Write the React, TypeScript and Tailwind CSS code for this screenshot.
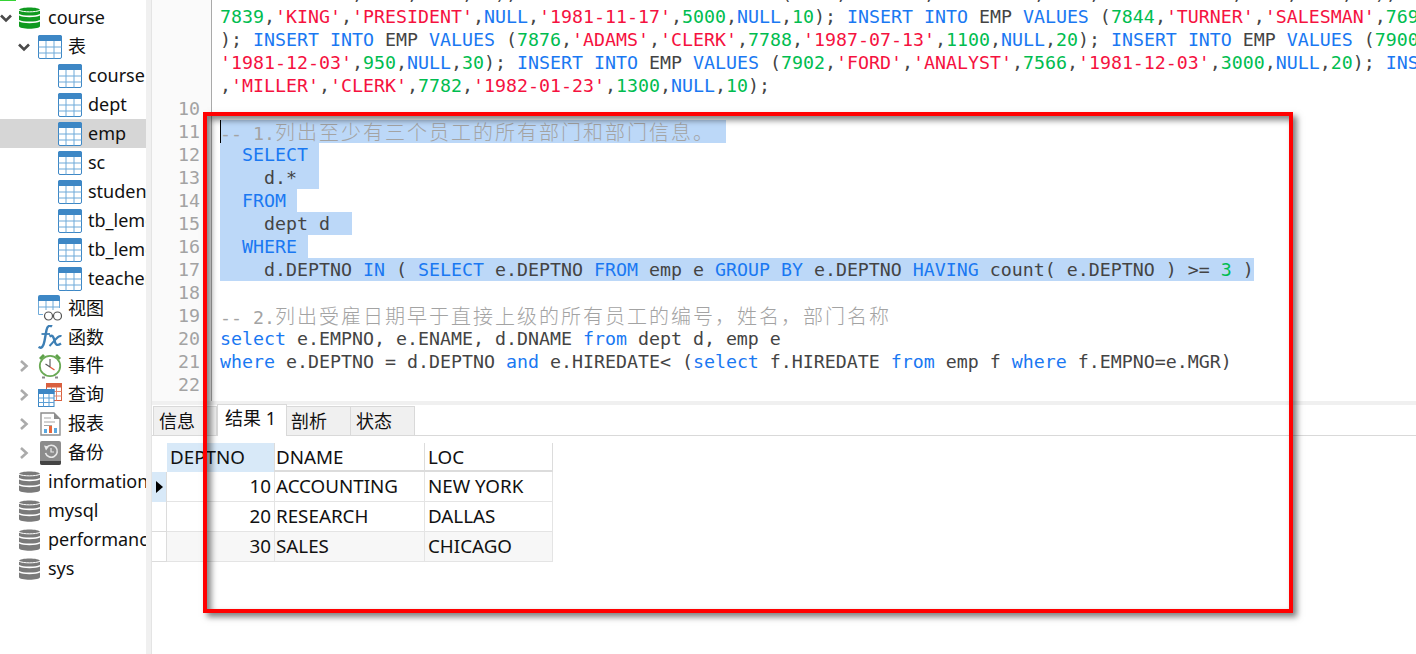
import React from "react";

const UI = "font-['Noto_Sans','Noto_Sans_CJK_SC',sans-serif]";

function Chevron({ open, dark }: { open?: boolean; dark?: boolean }) {
  return (
    <svg width="12" height="12" viewBox="0 0 12 12" className="shrink-0">
      <polyline
        points={open ? "1,3.5 6,8.5 11,3.5" : "3,1 8.5,6 3,11"}
        fill="none"
        stroke={dark ? "#4a4a4a" : "#ababab"}
        strokeWidth="2.6"
      />
    </svg>
  );
}

function Db({ color, band }: { color: string; band: string }) {
  return (
    <svg width="21" height="24" viewBox="0 0 21 24" className="shrink-0">
      <path d="M0 4 C0 0.5 21 0.5 21 4 V20 C21 23.6 0 23.6 0 20 Z" fill={color} />
      <path d="M0 8.6 C4 11 17 11 21 8.6 M0 14.6 C4 17 17 17 21 14.6" fill="none" stroke={band} strokeWidth="1.6" />
      <path d="M0 4.2 C4 6.4 17 6.4 21 4.2" fill="none" stroke={band} strokeWidth="1" />
    </svg>
  );
}

function TableIcon() {
  return (
    <svg width="24" height="24" viewBox="0 0 24 24" className="shrink-0">
      <rect x="0.5" y="0.5" width="23" height="23" rx="1.5" fill="#fff" stroke="#3d87c5" />
      <path d="M0 2 a2 2 0 0 1 2-2 H22 a2 2 0 0 1 2 2 V6 H0 Z" fill="#3d87c5" />
      <path d="M0.5 12 H23.5 M0.5 18 H23.5 M8 6 V23.5 M16 6 V23.5" stroke="#6faad9" strokeWidth="1" fill="none" />
    </svg>
  );
}

function ViewIcon() {
  return (
    <svg width="24" height="26" viewBox="0 0 24 26" className="shrink-0">
      <path d="M0 2 a2 2 0 0 1 2-2 H20 a2 2 0 0 1 2 2 V6 H0 Z" fill="#3d87c5" />
      <path d="M0.5 6 V19.5 H5 M21.5 6 V13 M0.5 12 H21.5 M8 6 V15 M15 6 V15" stroke="#6faad9" fill="none" />
      <circle cx="10.5" cy="21" r="4" fill="#fff" stroke="#555" strokeWidth="1.2" />
      <circle cx="19.5" cy="21" r="4" fill="#fff" stroke="#555" strokeWidth="1.2" />
    </svg>
  );
}

function FxIcon() {
  return (
    <svg width="24" height="24" viewBox="0 0 24 24" className="shrink-0">
      <path d="M0.5 22 C3.5 24 5.5 21.5 6.5 16 L8.5 5 C9.5 0.5 12 0 14 1.5" fill="none" stroke="#3d7fb5" strokeWidth="2.4" />
      <path d="M3.5 9 H12" fill="none" stroke="#3d7fb5" strokeWidth="1.8" />
      <path d="M11.5 11.5 C14.5 9.5 15.5 12 16.5 15.5 C17.5 19.5 18.5 21.5 23 18.5" fill="none" stroke="#3d7fb5" strokeWidth="2.4" />
      <path d="M23.5 11 C20 10 17 15.5 11.5 21" fill="none" stroke="#3d7fb5" strokeWidth="2" />
    </svg>
  );
}

function ClockIcon() {
  return (
    <svg width="24" height="26" viewBox="0 0 24 26" className="shrink-0">
      <path d="M1 5 L5 1 L7 3 L3 7 Z M23 5 L19 1 L17 3 L21 7 Z" fill="#5ea24a" />
      <circle cx="12" cy="13" r="10.2" fill="#fff" stroke="#6aa955" strokeWidth="1.8" />
      <path d="M12 6 V14 L7.5 11" fill="none" stroke="#555" strokeWidth="1.1" />
      <path d="M12 14 L16.5 17" fill="none" stroke="#e0593c" strokeWidth="1.4" />
      <rect x="4" y="23.5" width="3" height="2" fill="#888" />
      <rect x="17" y="23.5" width="3" height="2" fill="#888" />
    </svg>
  );
}

function QueryIcon() {
  return (
    <svg width="24" height="24" viewBox="0 0 24 24" className="shrink-0">
      <rect x="8.5" y="0.5" width="15" height="17" fill="#fff" stroke="#d9603f" />
      <rect x="8" y="0" width="16" height="4.5" fill="#d9603f" />
      <path d="M8.5 8.5 H23.5 M8.5 13 H23.5 M13.5 4 V17.5 M18.5 4 V17.5" stroke="#e58a70" fill="none" />
      <rect x="0.5" y="7" width="15.5" height="16.5" fill="#fff" stroke="#3d87c5" />
      <rect x="0" y="6" width="16.5" height="5" fill="#3d87c5" />
      <path d="M0.5 15 H16 M0.5 19.5 H16 M5.5 11 V23.5 M11 11 V23.5" stroke="#5b9fd6" fill="none" />
    </svg>
  );
}

function ReportIcon() {
  return (
    <svg width="21" height="24" viewBox="0 0 21 24" className="shrink-0">
      <path d="M1 1 H14 L20 7 V23 H1 Z" fill="#fff" stroke="#8d8d8d" strokeWidth="1.4" />
      <path d="M14 1 V7 H20 Z" fill="#8d8d8d" />
      <path d="M4 6 H11 M4 10 H15 M4 13.5 H12" stroke="#a5a5a5" strokeWidth="1.2" />
      <rect x="4" y="17" width="3" height="4" fill="#5aa8e0" />
      <rect x="9" y="14" width="3" height="7" fill="#e8673c" />
      <rect x="14" y="16" width="3" height="5" fill="#5aa8e0" />
    </svg>
  );
}

function BackupIcon() {
  return (
    <svg width="21" height="24" viewBox="0 0 21 24" className="shrink-0">
      <rect x="0" y="0" width="21" height="24" rx="2" fill="#8c8c8c" />
      <path d="M0 20 H21 V22 a2 2 0 0 1-2 2 H2 a2 2 0 0 1-2-2 Z" fill="#444" />
      <path d="M6.5 6.5 A6 6 0 1 1 5.5 12" fill="none" stroke="#e8e8e8" strokeWidth="1.6" />
      <path d="M4 4.5 L9 5.5 L6 9.5 Z" fill="#e8e8e8" />
      <path d="M11 7 V11 H14" fill="none" stroke="#e8e8e8" strokeWidth="1.2" />
    </svg>
  );
}

function Label({ children }: { children: React.ReactNode }) {
  return <span className="text-[18px] leading-[29px] text-[#111] whitespace-nowrap">{children}</span>;
}

function DbRow({ label, green, open }: { label: string; green?: boolean; open?: boolean }) {
  return (
    <div className="flex items-center h-[29px]">
      <div className="w-[19px] shrink-0 flex justify-start">{open && <Chevron open dark />}</div>
      {green ? <Db color="#0f9a1f" band="#ffffff" /> : <Db color="#7a7a7a" band="#ffffff" />}
      <div className="ml-[8px]"><Label>{label}</Label></div>
    </div>
  );
}

function GroupRow({ label, icon, open, plain }: { label: string; icon: React.ReactNode; open?: boolean; plain?: boolean }) {
  return (
    <div className="flex items-center h-[29px]">
      <div className="w-[38px] shrink-0 flex justify-end pr-[8px]">
        {!plain && <Chevron open={open} dark={open} />}
      </div>
      <div className="w-[24px] shrink-0 flex justify-center">{icon}</div>
      <div className={plain ? "ml-[6px] pt-[2px]" : "ml-[6px]"}><Label>{label}</Label></div>
    </div>
  );
}

function TableRow({ label, selected }: { label: string; selected?: boolean }) {
  return (
    <div className={selected ? "flex items-center h-[29px] pl-[58px] bg-[#d6d6d6]" : "flex items-center h-[29px] pl-[58px]"}>
      <TableIcon />
      <div className="ml-[6px]"><Label>{label}</Label></div>
    </div>
  );
}

function Sidebar() {
  return (
    <div className={`w-[146px] shrink-0 overflow-hidden bg-white ${UI}`}>
      <div className="h-px w-[16px] bg-[#35d335]" />
      <div className="h-[2px]" />
      <DbRow label="course" green open />
      <GroupRow label="表" icon={<TableIcon />} open />
      <TableRow label="course" />
      <TableRow label="dept" />
      <TableRow label="emp" selected />
      <TableRow label="sc" />
      <TableRow label="student" />
      <TableRow label="tb_lemon" />
      <TableRow label="tb_lemon" />
      <TableRow label="teacher" />
      <GroupRow label="视图" icon={<ViewIcon />} plain />
      <GroupRow label="函数" icon={<FxIcon />} plain />
      <GroupRow label="事件" icon={<ClockIcon />} />
      <GroupRow label="查询" icon={<QueryIcon />} />
      <GroupRow label="报表" icon={<ReportIcon />} />
      <GroupRow label="备份" icon={<BackupIcon />} />
      <DbRow label="information_schema" />
      <DbRow label="mysql" />
      <DbRow label="performance_schema" />
      <DbRow label="sys" />
    </div>
  );
}

const TOKEN =
  /('[^']*'|\b\d+\b|\b(?:INSERT|INTO|VALUES|NULL|SELECT|FROM|WHERE|IN|GROUP|BY|HAVING|select|from|where|and)\b)/;

function tokenClass(t: string) {
  if (t.startsWith("'")) return "text-[#f5123f]";
  if (/^\d+$/.test(t)) return "text-[#00bd50]";
  return "text-[#1a78f2]";
}

function Code({ text }: { text: string }) {
  return (
    <>
      {text.split(TOKEN).map((t, i) =>
        i % 2 === 1 ? (
          <span key={i} className={tokenClass(t)}>{t}</span>
        ) : (
          <span key={i}>{t}</span>
        ),
      )}
    </>
  );
}

function Comment({ prefix, cjk, tail }: { prefix: string; cjk: string; tail?: string }) {
  return (
    <span className="text-[#a3a3a3]">
      {prefix}
      <span className="text-[20px] tracking-[2px] font-['Noto_Sans_CJK_SC',sans-serif] font-light">{cjk}</span>
      {tail}
    </span>
  );
}

type Line = { n?: number; text?: string; sel?: boolean; comment?: React.ReactNode };

const LINES: Line[] = [
  { text: "'1981-06-09',2450,NULL,10); INSERT INTO EMP VALUES (7788,'SCOTT','ANALYST',7566,'1987-07-13',3000,NULL,20); INSERT INTO EMP VALUES (" },
  { text: "7839,'KING','PRESIDENT',NULL,'1981-11-17',5000,NULL,10); INSERT INTO EMP VALUES (7844,'TURNER','SALESMAN',7698,'1981-09-08',1500,0,30" },
  { text: "); INSERT INTO EMP VALUES (7876,'ADAMS','CLERK',7788,'1987-07-13',1100,NULL,20); INSERT INTO EMP VALUES (7900,'JAMES','CLERK',7698," },
  { text: "'1981-12-03',950,NULL,30); INSERT INTO EMP VALUES (7902,'FORD','ANALYST',7566,'1981-12-03',3000,NULL,20); INSERT INTO EMP VALUES (7934" },
  { text: ",'MILLER','CLERK',7782,'1982-01-23',1300,NULL,10);" },
  { n: 10, text: "" },
  { n: 11, sel: true, comment: <Comment prefix="-- 1." cjk="列出至少有三个员工的所有部门和部门信息。" tail=" " /> },
  { n: 12, sel: true, text: "  SELECT " },
  { n: 13, sel: true, text: "    d.*  " },
  { n: 14, sel: true, text: "  FROM " },
  { n: 15, sel: true, text: "    dept d  " },
  { n: 16, sel: true, text: "  WHERE " },
  { n: 17, sel: true, text: "    d.DEPTNO IN ( SELECT e.DEPTNO FROM emp e GROUP BY e.DEPTNO HAVING count( e.DEPTNO ) >= 3 )" },
  { n: 18, text: "" },
  { n: 19, comment: <Comment prefix="-- 2." cjk="列出受雇日期早于直接上级的所有员工的编号，姓名，部门名称" /> },
  { n: 20, text: "select e.EMPNO, e.ENAME, d.DNAME from dept d, emp e" },
  { n: 21, text: "where e.DEPTNO = d.DEPTNO and e.HIREDATE< (select f.HIREDATE from emp f where f.EMPNO=e.MGR)" },
  { n: 22, text: "" },
];

function Editor() {
  return (
    <div className="h-[401px] overflow-hidden flex bg-white font-['DejaVu_Sans_Mono',monospace] text-[18.27px] leading-[23px] text-[#444]">
      <div className="w-[60px] shrink-0 bg-[#fafafa] border-r border-[#aaaaaa]">
        <div className="mt-[-18px] pr-[11px] text-right text-[#a3a3a3]">
          {LINES.map((l, i) => (
            <div key={i} className="h-[23px]">{l.n ?? ""}</div>
          ))}
        </div>
      </div>
      <div className="flex-1 min-w-0 overflow-hidden pl-[8px]">
        <div className="mt-[-18px]">
          {LINES.map((l, i) => (
            <div key={i} className="h-[23px] whitespace-pre flex">
              <span className={l.sel ? "bg-[#bcd8f8] h-[23px] overflow-hidden" : "h-[23px]"}>
                {l.comment ?? <Code text={l.text ?? ""} />}
              </span>
            </div>
          ))}
        </div>
      </div>
    </div>
  );
}

function Tabs() {
  return (
    <div className={`flex items-end h-[31px] pl-[1px] border-b border-[#d9d9d9] bg-white text-[18px] text-[#111] ${UI}`}>
      <div className="w-[64px] h-[29px] bg-[#f0f0f0] border border-b-0 border-[#d9d9d9] pl-[5px] leading-[28px]">信息</div>
      <div className="w-[70px] h-[32px] bg-white border border-b-0 border-[#d9d9d9] pl-[7px] leading-[27px] mb-[-1px]">结果 1</div>
      <div className="w-[64px] h-[29px] bg-[#f0f0f0] border-r border-t border-[#d9d9d9] pl-[4px] leading-[28px]">剖析</div>
      <div className="w-[64px] h-[29px] bg-[#f0f0f0] border-r border-t border-[#d9d9d9] pl-[5px] leading-[28px]">状态</div>
    </div>
  );
}

const ROWS = [
  ["10", "ACCOUNTING", "NEW YORK"],
  ["20", "RESEARCH", "DALLAS"],
  ["30", "SALES", "CHICAGO"],
];

function ResultGrid() {
  return (
    <div className={`pt-[7px] text-[18.8px] text-[#111] ${UI}`}>
      <div className="grid grid-cols-[15px_107px_151px_128px] w-[401px]">
        <div className="h-[29px]" />
        <div className="h-[29px] bg-[#d8e9f8] pl-[3px] leading-[28px]">DEPTNO</div>
        <div className="h-[29px] border-l border-r border-b-2 border-[#dcdcdc] pl-[1px] leading-[28px]">DNAME</div>
        <div className="h-[29px] border-r border-b-2 border-[#dcdcdc] pl-[3px] leading-[28px]">LOC</div>
        {ROWS.map((r, i) => (
          <React.Fragment key={r[0]}>
            <div className={i === 0 ? "h-[30px] bg-[#d8e9f8] border-r border-[#dcdcdc] flex items-center justify-center" : "h-[30px] border-r border-b border-[#dcdcdc]"}>
              {i === 0 && (
                <svg width="7" height="12" viewBox="0 0 7 12"><path d="M0 0 L7 6 L0 12 Z" fill="#000" /></svg>
              )}
            </div>
            <div className={i === 2 ? "h-[30px] bg-[#f7f7f7] border-b border-[#e4e4e4] pr-[3px] text-right leading-[28px]" : "h-[30px] border-b border-[#e4e4e4] pr-[3px] text-right leading-[28px]"}>{r[0]}</div>
            <div className={i === 2 ? "h-[30px] bg-[#f7f7f7] border-l border-r border-b border-[#e4e4e4] pl-[1px] leading-[28px]" : "h-[30px] border-l border-r border-b border-[#e4e4e4] pl-[1px] leading-[28px]"}>{r[1]}</div>
            <div className={i === 2 ? "h-[30px] bg-[#f7f7f7] border-r border-b border-[#e4e4e4] pl-[3px] leading-[28px]" : "h-[30px] border-r border-b border-[#e4e4e4] pl-[3px] leading-[28px]"}>{r[2]}</div>
          </React.Fragment>
        ))}
      </div>
    </div>
  );
}

export default function App() {
  return (
    <div className="relative flex w-[1416px] h-[654px] overflow-hidden bg-white">
      <Sidebar />
      <div className="w-[5px] shrink-0 bg-[#f0f0f0]" />
      <div className="flex-1 min-w-0 flex flex-col border-l border-[#e4e4e4]">
        <Editor />
        <div className="h-[4px] bg-[#f0f0f0]" />
        <Tabs />
        <ResultGrid />
      </div>
      <div className="absolute left-[220px] top-[120px] w-px h-[23px] bg-black" />
      <div className="absolute left-[203px] top-[112px] w-[1090px] h-[501px] border-[4px] border-[#ff0000] pointer-events-none shadow-[4px_4px_6px_rgba(0,0,0,0.5),inset_4px_4px_6px_rgba(0,0,0,0.5)]" />
    </div>
  );
}
